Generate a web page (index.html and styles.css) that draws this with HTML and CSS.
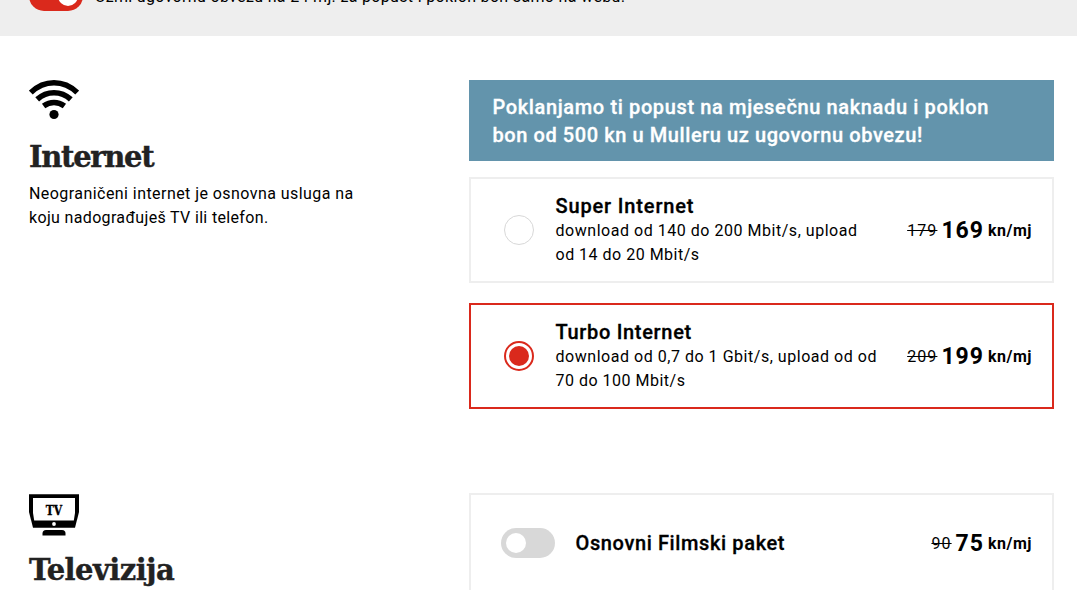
FILE: index.html
```
<!DOCTYPE html>
<html lang="hr">
<head>
<meta charset="utf-8">
<title>Internet i televizija</title>
<link rel="stylesheet" href="styles.css">
</head>
<body>
<header class="topbar">
  <span class="toggle toggle-on"></span>
  <span class="topbar-text">Uzmi ugovornu obvezu na 24 mj. za popust i poklon bon samo na webu!</span>
</header>
<main>
  <section class="service">
    <div class="intro">
      <svg class="icon" width="50" height="42" viewBox="0 0 50 42" fill="none" stroke="#000" stroke-width="5.6">
        <path d="M1.8 12.6Q12 2.8 25 2.8T48.2 12.6"/>
        <path d="M8.2 19.4Q15.5 12.7 25 12.7T41.8 19.4"/>
        <path d="M14.6 26Q19.5 22.5 25 22.5T35.4 26"/>
        <circle cx="25" cy="34.5" r="4.6" fill="#000" stroke="none"/>
      </svg>
      <h2><span class="internet">Internet</span></h2>
      <p class="desc"><span class="d1">Neograničeni internet je osnovna usluga na</span><br><span class="d2">koju nadograđuješ TV ili telefon.</span></p>
    </div>
    <div class="options">
      <div class="banner"><span class="b1">Poklanjamo ti popust na mjesečnu naknadu i poklon</span><br><span class="b2">bon od 500 kn u Mulleru uz ugovornu obvezu!</span></div>
      <div class="card">
        <span class="radio"></span>
        <div class="info"><h3 class="t1">Super Internet</h3><p><span class="o1">download od 140 do 200 Mbit/s, upload</span><br><span class="o2">od 14 do 20 Mbit/s</span></p></div>
        <div class="price"><s>179</s><b>169</b><strong>kn/mj</strong></div>
      </div>
      <div class="card selected">
        <span class="radio checked"></span>
        <div class="info"><h3 class="t2">Turbo Internet</h3><p><span class="o1">download od 0,7 do 1 Gbit/s, upload od od</span><br><span class="o2">70 do 100 Mbit/s</span></p></div>
        <div class="price"><s>209</s><b>199</b><strong>kn/mj</strong></div>
      </div>
    </div>
  </section>
  <section class="service tv">
    <div class="intro">
      <svg class="icon" width="50" height="42" viewBox="0 0 50 42">
        <path d="M0 .3H50V18L46 33.8H4L0 18Z"/>
        <path d="M4 4H46V19L44.8 26.5H5.2L4 19Z" fill="#fff"/>
        <circle cx="25" cy="30" r="1.9" fill="#fff"/>
        <path d="M13.5 41.5V39.5Q13.5 36 17 36H33Q36.5 36 36.5 39.5V41.5Z"/>
        <text class="tv-label" x="25" y="20.5" text-anchor="middle">TV</text>
      </svg>
      <h2><span class="televizija">Televizija</span></h2>
    </div>
    <div class="options">
      <div class="card film">
        <span class="toggle"></span>
        <h3 class="t3">Osnovni Filmski paket</h3>
        <div class="price"><s>90</s><b>75</b><strong>kn/mj</strong></div>
      </div>
    </div>
  </section>
</main>
</body>
</html>
```
FILE: styles.css
```
* { box-sizing: border-box; }
html, body { height: 590px; overflow: hidden; }
body { margin: 0; background: #fff; color: #000; font: 16px/24px Roboto, sans-serif; white-space: nowrap; }
h2, h3, p { margin: 0; }
.topbar { display: flex; align-items: center; gap: 12px; height: 64px; margin-top: -28px; padding: 0 29px 16px; background: #eee; }
.toggle { display: flex; flex: none; align-items: center; width: 54px; height: 30px; padding: 5px; border-radius: 15px; background: #d8d8d8; }
.toggle::before { content: ""; width: 20px; height: 20px; border-radius: 50%; background: #fff; }
.toggle-on { justify-content: flex-end; background: #da291c; }
.topbar-text { padding-top: 2px; letter-spacing: .33px; }
.service { display: grid; grid-template-columns: 440px 585px; padding: 44px 0 0 29px; }
.tv { padding-top: 84px; }
.icon { display: block; }
.tv .icon { margin-top: 1px; }
h2 { height: 44px; margin-top: 13px; font: bold 29px/44px "DejaVu Serif", serif; color: #222; -webkit-text-stroke: .4px #222; }
.tv h2 { margin-top: 12px; }
.internet { letter-spacing: -1.3px; }
.televizija { letter-spacing: -.55px; }
.desc { margin-top: 3px; }
.d1 { letter-spacing: .44px; }
.d2 { letter-spacing: .34px; }
.banner { height: 81px; padding: 13px 23.5px; background: #6394ac; color: #fff; font-weight: 500; font-size: 20px; line-height: 28px; -webkit-text-stroke: .3px #fff; }
.b1 { letter-spacing: .63px; }
.b2 { letter-spacing: .58px; }
.card { display: flex; align-items: center; height: 106px; margin-top: 16px; padding: 0 20px 0 33px; border: 2px solid #eee; }
.selected { margin-top: 20px; border-color: #da291c; }
.radio { flex: none; width: 30px; height: 30px; margin-right: 21.5px; border: 1px solid #d8d8d8; border-radius: 50%; }
.checked { border: 2px solid #da291c; padding: 3px; background: #da291c content-box; }
.info { flex: 1; }
.info h3 { height: 25px; margin-top: 1px; }
.o1 { letter-spacing: .53px; }
.o2 { letter-spacing: .5px; }
h3 { font-size: 20px; line-height: 24px; font-weight: 500; -webkit-text-stroke: .3px #000; }
.t1 { letter-spacing: .85px; }
.t2 { letter-spacing: .68px; }
.t3 { letter-spacing: .62px; }
.price { display: flex; align-items: center; margin-left: auto; padding-top: 1px; }
.price s { margin-right: 4px; letter-spacing: 1.1px; }
.price b { font-size: 23px; font-weight: 700; margin-right: 4px; letter-spacing: 1px; }
.price strong { font-weight: 700; letter-spacing: .5px; }
.film { height: 101px; margin-top: 0; padding-left: 30px; }
.film .toggle { margin-bottom: 1px; }
.film h3 { margin: 0 0 1px 20.5px; }
.film .price { padding-top: 0; }
.tv-label { font: bold 12px "DejaVu Serif Condensed", "DejaVu Serif", serif; stroke: #000; stroke-width: .3px; }
```
